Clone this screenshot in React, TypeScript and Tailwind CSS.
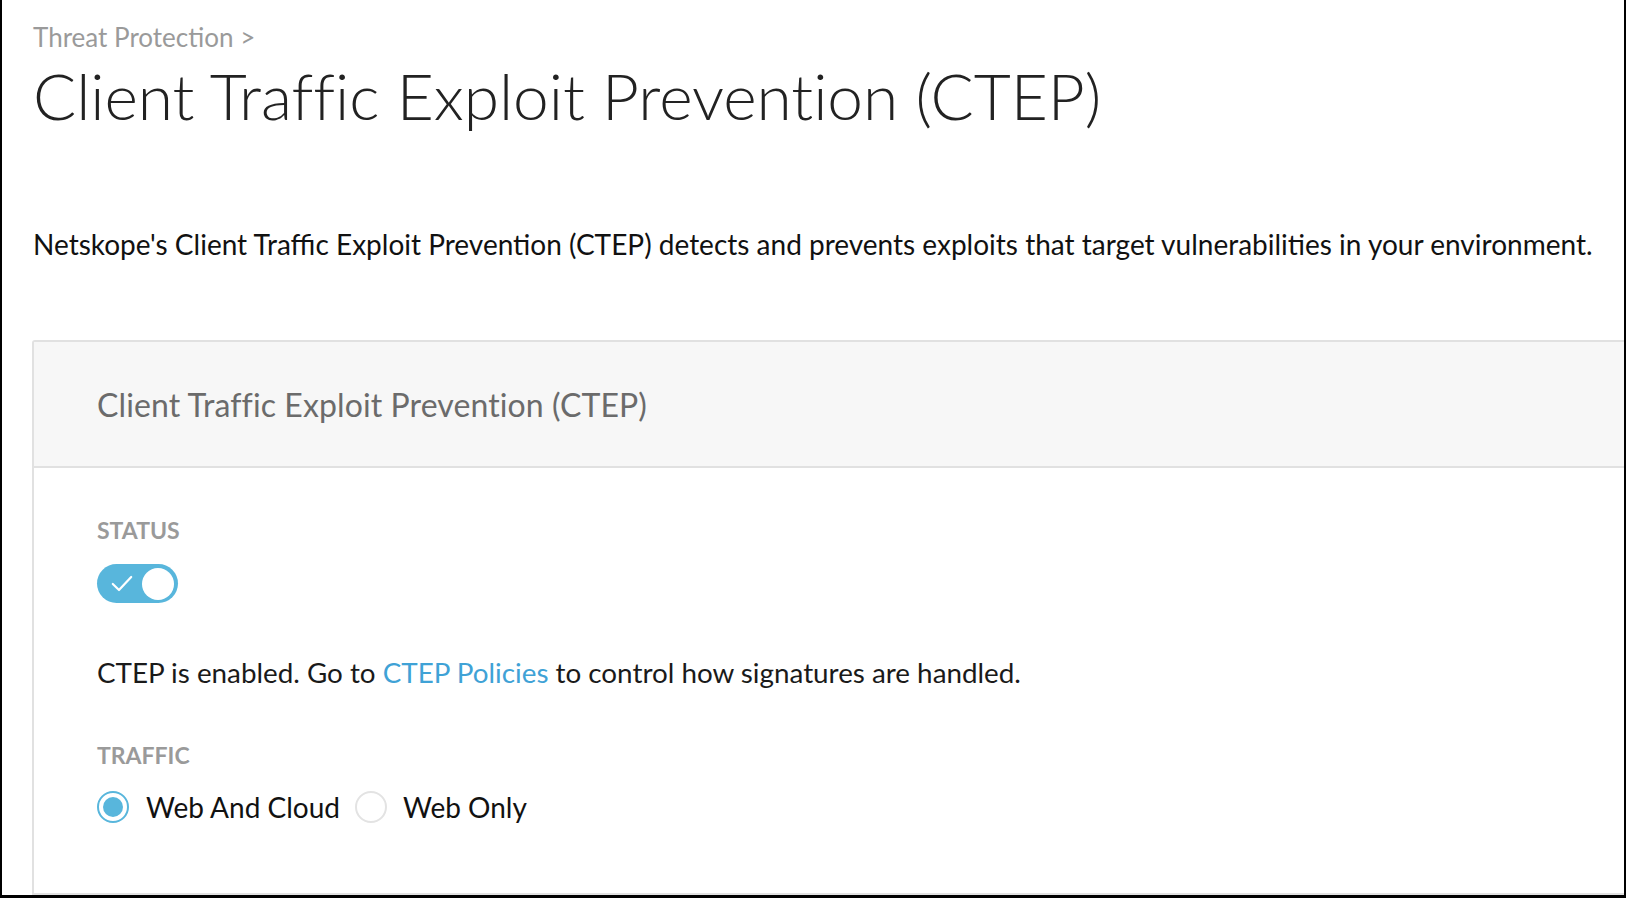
import React from "react";

export default function App() {
  return (
    <div
      className="w-[1626px] h-[898px] bg-white border-l-2 border-r-2 border-b-[3px] border-black overflow-hidden flex flex-col"
      style={{ fontFamily: "Lato, 'Open Sans', sans-serif" }}
    >
      <div className="pl-[31px] pt-[23px]">
        <div className="text-[26px] leading-[28px] text-[#9a9a9a]">Threat Protection &gt;</div>
        <h1 className="mt-[9px] text-[64px] leading-[72px] font-light text-[#222222] tracking-[-0.05px]">
          Client Traffic Exploit Prevention (CTEP)
        </h1>
        <p className="mt-[96px] text-[28px] leading-[32px] text-[#111111] whitespace-nowrap">
          Netskope's Client Traffic Exploit Prevention (CTEP) detects and prevents exploits that target
          vulnerabilities in your environment.
        </p>
      </div>
      <div className="pl-[30px] mt-[80px] flex-1 min-h-0">
        <div className="w-[1620px] h-full border-2 border-[#e1e1e1] rounded-t-[3px] flex flex-col">
          <div className="h-[126px] bg-[#f7f7f7] border-b-2 border-[#e1e1e1] flex items-center pl-[63px] pt-[2px]">
            <span className="text-[32px] tracking-[0.1px] text-[#6b6b6b]">Client Traffic Exploit Prevention (CTEP)</span>
          </div>
          <div className="pl-[63px] pt-[50px] flex flex-col items-start">
            <div className="text-[23px] leading-[24px] font-bold text-[#9a9a9a]">STATUS</div>
            <div className="mt-[22px] w-[81px] h-[39px] rounded-full bg-[#58b6dc] flex items-center justify-between pl-[14px] pr-[4px]">
              <svg width="22" height="17" viewBox="0 0 22 17" fill="none">
                <path d="M1.8 9 L8 15 L20.2 2" stroke="white" strokeWidth="2.2" strokeLinecap="round" strokeLinejoin="round" />
              </svg>
              <div className="w-[32px] h-[32px] rounded-full bg-white" />
            </div>
            <p className="mt-[54px] text-[27.8px] leading-[32px] text-[#1a1a1a] whitespace-nowrap">
              CTEP is enabled. Go to <span className="text-[#3fa2d6]">CTEP Policies</span> to control how signatures are handled.
            </p>
            <div className="mt-[54px] text-[23px] leading-[24px] font-bold text-[#9a9a9a]">TRAFFIC</div>
            <div className="mt-[24px] flex items-center">
              <div className="w-[32px] h-[32px] rounded-full border-2 border-[#58b6dc] flex items-center justify-center">
                <div className="w-[20px] h-[20px] rounded-full bg-[#58b6dc]" />
              </div>
              <span className="ml-[17px] text-[28px] leading-[32px] text-[#111111]">Web And Cloud</span>
              <div className="ml-[15px] w-[32px] h-[32px] rounded-full border-2 border-[#e3e3e3]" />
              <span className="ml-[16px] text-[28px] leading-[32px] text-[#111111]">Web Only</span>
            </div>
          </div>
        </div>
      </div>
    </div>
  );
}
